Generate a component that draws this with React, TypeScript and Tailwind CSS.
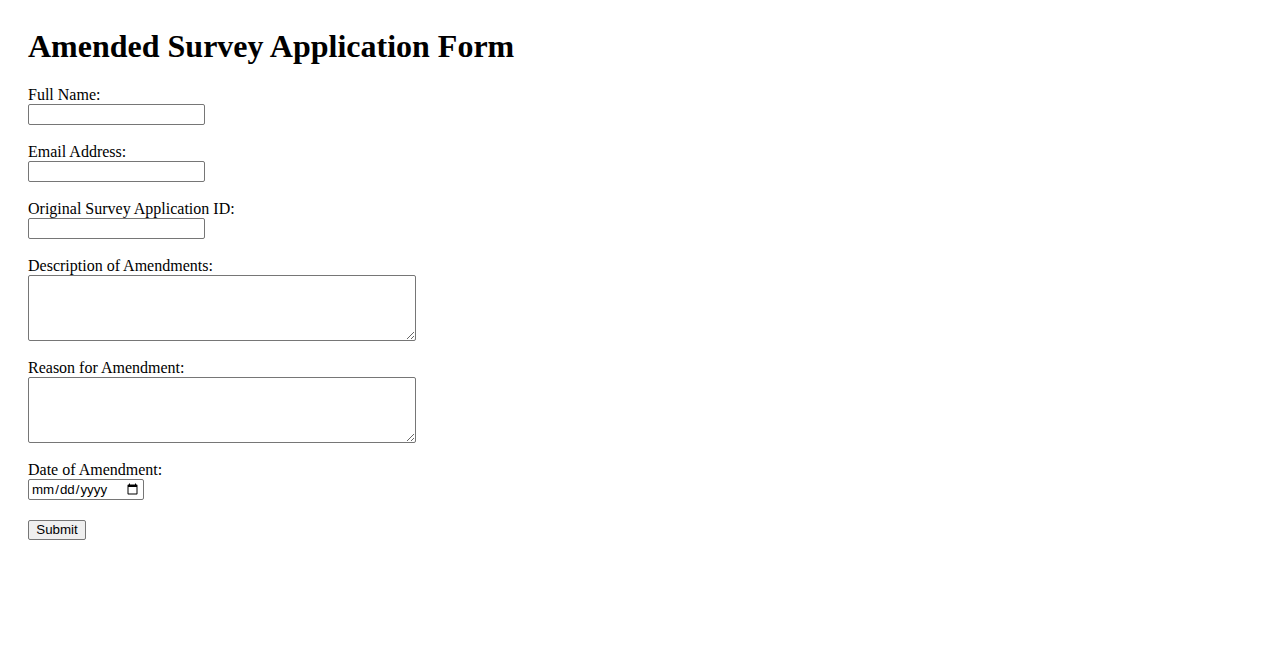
// App.tsx — amended survey application form, plain browser-default look
const SERIF = "font-['Liberation_Serif','Times_New_Roman',serif]";
const SANS = "font-['Liberation_Sans',Arial,sans-serif]";

const INPUT =
  'block w-[177px] h-[21px] px-[2px] py-[1px] border border-[#767676] rounded-[2px] bg-white text-[13.33px] text-black outline-none';
const AREA =
  'block w-[388px] h-[66px] px-[2px] py-[2px] border border-[#767676] rounded-[2px] bg-white text-[13.33px] text-black outline-none resize';

function Field({ label, children }: { label: string; children: React.ReactNode }) {
  return (
    <div className="mb-[18px]">
      <label className="block h-[18px] leading-[18px] text-[16px]">{label}</label>
      {children}
    </div>
  );
}

export default function App() {
  return (
    <div className={`min-h-[650px] bg-white text-black px-[28px] pt-[28px] ${SERIF}`}>
      <h1 className="text-[32px] font-bold leading-[37px] mb-[21px]">Amended Survey Application Form</h1>

      <form onSubmit={(e) => e.preventDefault()}>
        <Field label="Full Name:">
          <input type="text" className={`${INPUT} ${SANS}`} />
        </Field>
        <Field label="Email Address:">
          <input type="email" className={`${INPUT} ${SANS}`} />
        </Field>
        <Field label="Original Survey Application ID:">
          <input type="text" className={`${INPUT} ${SANS}`} />
        </Field>
        <Field label="Description of Amendments:">
          <textarea className={`${AREA} font-['Liberation_Mono',monospace]`} />
        </Field>
        <Field label="Reason for Amendment:">
          <textarea className={`${AREA} font-['Liberation_Mono',monospace]`} />
        </Field>
        <Field label="Date of Amendment:">
          <input
            type="date"
            className={`block w-[116px] h-[21px] pl-[2px] pr-[2px] py-[1px] border border-[#767676] rounded-[2px] bg-white text-[13.33px] text-black ${SANS}`}
          />
        </Field>

        <div className="pt-[2px]">
          <button
            type="submit"
            className={`block w-[58px] h-[20px] border border-[#767676] rounded-[2px] bg-[#efefef] text-[13.33px] leading-[16px] text-black ${SANS}`}
          >
            Submit
          </button>
        </div>
      </form>
    </div>
  );
}
